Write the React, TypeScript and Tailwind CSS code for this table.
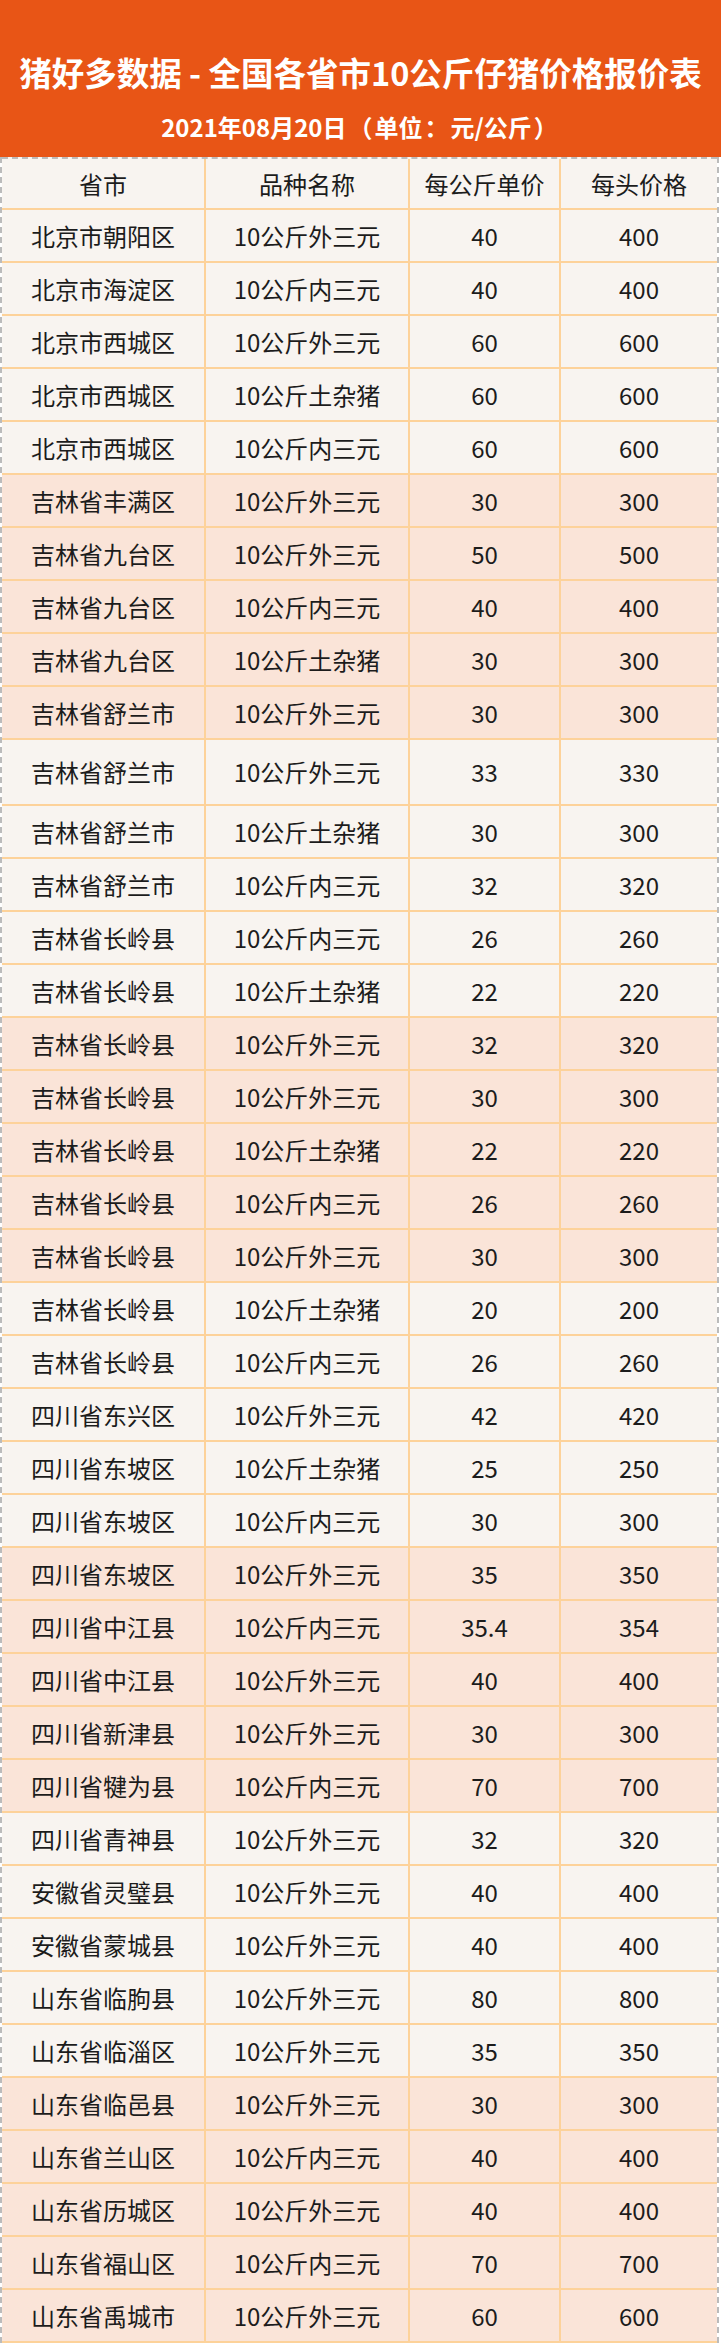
const rows: [string, string, string, string][] = [
  ['北京市朝阳区', '10公斤外三元', '40', '400'],
  ['北京市海淀区', '10公斤内三元', '40', '400'],
  ['北京市西城区', '10公斤外三元', '60', '600'],
  ['北京市西城区', '10公斤土杂猪', '60', '600'],
  ['北京市西城区', '10公斤内三元', '60', '600'],
  ['吉林省丰满区', '10公斤外三元', '30', '300'],
  ['吉林省九台区', '10公斤外三元', '50', '500'],
  ['吉林省九台区', '10公斤内三元', '40', '400'],
  ['吉林省九台区', '10公斤土杂猪', '30', '300'],
  ['吉林省舒兰市', '10公斤外三元', '30', '300'],
  ['吉林省舒兰市', '10公斤外三元', '33', '330'],
  ['吉林省舒兰市', '10公斤土杂猪', '30', '300'],
  ['吉林省舒兰市', '10公斤内三元', '32', '320'],
  ['吉林省长岭县', '10公斤内三元', '26', '260'],
  ['吉林省长岭县', '10公斤土杂猪', '22', '220'],
  ['吉林省长岭县', '10公斤外三元', '32', '320'],
  ['吉林省长岭县', '10公斤外三元', '30', '300'],
  ['吉林省长岭县', '10公斤土杂猪', '22', '220'],
  ['吉林省长岭县', '10公斤内三元', '26', '260'],
  ['吉林省长岭县', '10公斤外三元', '30', '300'],
  ['吉林省长岭县', '10公斤土杂猪', '20', '200'],
  ['吉林省长岭县', '10公斤内三元', '26', '260'],
  ['四川省东兴区', '10公斤外三元', '42', '420'],
  ['四川省东坡区', '10公斤土杂猪', '25', '250'],
  ['四川省东坡区', '10公斤内三元', '30', '300'],
  ['四川省东坡区', '10公斤外三元', '35', '350'],
  ['四川省中江县', '10公斤内三元', '35.4', '354'],
  ['四川省中江县', '10公斤外三元', '40', '400'],
  ['四川省新津县', '10公斤外三元', '30', '300'],
  ['四川省犍为县', '10公斤内三元', '70', '700'],
  ['四川省青神县', '10公斤外三元', '32', '320'],
  ['安徽省灵璧县', '10公斤外三元', '40', '400'],
  ['安徽省蒙城县', '10公斤外三元', '40', '400'],
  ['山东省临朐县', '10公斤外三元', '80', '800'],
  ['山东省临淄区', '10公斤外三元', '35', '350'],
  ['山东省临邑县', '10公斤外三元', '30', '300'],
  ['山东省兰山区', '10公斤内三元', '40', '400'],
  ['山东省历城区', '10公斤外三元', '40', '400'],
  ['山东省福山区', '10公斤内三元', '70', '700'],
  ['山东省禹城市', '10公斤外三元', '60', '600'],
]

const cell = 'flex items-center justify-center border-r-2 border-[#fdd29a]'

function Row({ cols, tall, peach }: { cols: string[]; tall?: boolean; peach?: boolean }) {
  return (
    <div
      className={`grid grid-cols-[204px_204px_151px_1fr] border-b-2 border-[#fdd29a] ${
        tall ? 'h-[66px]' : 'h-[53px]'
      } ${peach ? 'bg-[#fae4d8]' : 'bg-[#f8f4f0]'}`}
    >
      <div className={cell}>{cols[0]}</div>
      <div className={cell}>{cols[1]}</div>
      <div className={cell}>{cols[2]}</div>
      <div className="flex items-center justify-center">{cols[3]}</div>
    </div>
  )
}

export default function App() {
  return (
    <div
      className="w-[721px] bg-white"
      style={{ fontFamily: '"Noto Sans CJK SC", "Noto Sans", sans-serif' }}
    >
      {/* Banner */}
      <div className="flex h-[157px] flex-col items-center bg-[#e85516] pt-[49px] text-white">
        <h1 className="text-[32.5px] font-bold leading-[46px]">猪好多数据 - 全国各省市10公斤仔猪价格报价表</h1>
        <p className="mt-[15px] text-[24px] font-bold leading-[34px]">
          2021年08月20日<span className="mx-[2px]">（</span>单位<span className="mx-[2px]">：</span>元/公斤<span className="mx-[2px]">）</span>
        </p>
      </div>

      {/* Table */}
      <div className="w-[719px] border-x-2 border-dashed border-x-[#bbbbbb] text-[24px] leading-none text-[#1c1c1c]">
        <div className="grid h-[53px] grid-cols-[204px_204px_151px_1fr] border-t-2 border-b-2 border-t-[#bbbbbb] border-b-[#fdd29a] bg-[#f8f4f0] [border-top-style:dashed]">
          <div className={cell}>省市</div>
          <div className={cell}>品种名称</div>
          <div className={cell}>每公斤单价</div>
          <div className="flex items-center justify-center">每头价格</div>
        </div>
        {rows.map((r, i) => (
          <Row key={i} cols={r} tall={i === 10} peach={Math.floor(i / 5) % 2 === 1} />
        ))}
      </div>
    </div>
  )
}
